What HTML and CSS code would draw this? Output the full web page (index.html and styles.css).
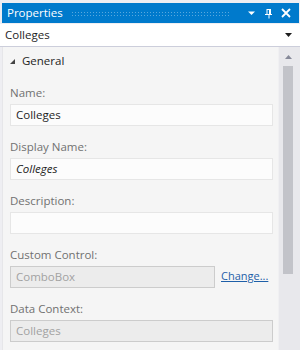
FILE: index.html
```html
<!DOCTYPE html>
<html>
<head>
<meta charset="utf-8">
<link rel="stylesheet" href="styles.css">
</head>
<body>
<div class="window">
  <div class="titlebar">
    <span class="title">Properties</span>
    <span class="dots"></span>
    <svg class="ticon" width="9" height="6" viewBox="0 0 9 6"><path d="M1 1.5 H8 L4.5 5 Z" fill="#fff"/></svg>
    <svg class="ticon pin" width="9" height="11" viewBox="0 0 9 11"><path d="M2.5 1 H7 V6 H8 V7 H5.5 V10.5 H4.5 V7 H1 V6 H2.5 Z M3.5 2 V6 H5 V2 Z" fill="#fff"/></svg>
    <svg class="ticon" width="10" height="10" viewBox="0 0 10 10"><path d="M1 1 L9 9 M9 1 L1 9" stroke="#fff" stroke-width="1.8"/></svg>
  </div>
  <div class="combo">
    <span class="combo-text">Colleges</span>
    <svg width="7" height="4" viewBox="0 0 7 4"><path d="M0 0 H7 L3.5 4 Z" fill="#1e1e1e"/></svg>
  </div>
  <div class="panel">
    <div class="content">
      <div class="section">
        <svg class="tri" width="5" height="5" viewBox="0 0 5 5"><path d="M5 0 V5 H0 Z" fill="#444"/></svg>
        <span>General</span>
      </div>
      <div class="field first">
        <div class="label">Name:</div>
        <div class="box">Colleges</div>
      </div>
      <div class="field">
        <div class="label">Display Name:</div>
        <div class="box italic">Colleges</div>
      </div>
      <div class="field">
        <div class="label">Description:</div>
        <div class="box"></div>
      </div>
      <div class="field">
        <div class="label">Custom Control:</div>
        <div class="row">
          <div class="box disabled short">ComboBox</div>
          <a class="link">Change...</a>
        </div>
      </div>
      <div class="field">
        <div class="label">Data Context:</div>
        <div class="box disabled">Colleges</div>
      </div>
    </div>
    <div class="scrollbar">
      <svg class="up" width="7" height="4" viewBox="0 0 7 4"><path d="M0 4 H7 L3.5 0 Z" fill="#868999"/></svg>
      <div class="thumb"></div>
    </div>
  </div>
</div>
</body>
</html>
```
FILE: styles.css
```css
* { box-sizing: border-box; }
html, body { margin: 0; padding: 0; }
body {
  width: 300px;
  height: 350px;
  overflow: hidden;
  background: #eeeef2;
  font-family: "Open Sans", "Noto Sans", sans-serif;
  font-size: 11px;
  color: #1e1e1e;
}
.window {
  padding: 3px 0 0 2px;
  height: 350px;
  display: flex;
  flex-direction: column;
}
.titlebar {
  height: 20px;
  background: #007acc;
  display: flex;
  align-items: center;
  padding: 0 8px 0 5px;
  margin-right: 1px;
  color: #fff;
}
.title { font-size: 11.5px; line-height: 20px; }
.dots {
  flex: 1;
  height: 5px;
  margin: 1px 10px 0 8px;
  background-image: radial-gradient(circle, rgba(255,255,255,0.35) 0.6px, transparent 0.9px);
  background-size: 3px 3px;
}
.ticon { display: block; margin-left: 6px; }
.pin { margin-left: 8px; margin-right: 2px; }
.combo {
  height: 23px;
  background: #fff;
  border-bottom: 1px solid #cccedb;
  display: flex;
  align-items: center;
  justify-content: space-between;
  padding: 0 8px 0 5px;
  margin: 1px 0 0 -2px;
  font-size: 11.5px;
}
.combo-text { line-height: 20px; }
.panel {
  flex: 1;
  display: flex;
  background: #f5f5f5;
  border-left: 1px solid #e6e6e9;
}
.content {
  flex: 1;
  padding: 6px 5px 0 7px;
}
.section {
  display: flex;
  align-items: center;
  height: 16px;
  line-height: 16px;
  font-size: 11.5px;
}
.tri { margin: 1px 7px 0 0; }
.field { margin-top: 13px; }
.field.first { margin-top: 16px; }
.label {
  color: #717171;
  line-height: 16px;
  margin-bottom: 3px;
  font-size: 11.5px;
}
.box {
  height: 22px;
  background: #fcfcfc;
  border: 1px solid #e6e6e6;
  padding: 0 5px;
  line-height: 20px;
  color: #1e1e1e;
  font-size: 11.5px;
}
.italic { font-style: italic; }
.box.disabled {
  background: #ececec;
  border-color: #cccccc;
  color: #a2a2a2;
}
.row { display: flex; align-items: center; }
.short { width: 205px; }
.link {
  color: #1e5fa8;
  text-decoration: underline;
  margin-left: 6px;
  margin-top: -4px;
  font-size: 11px;
}
.scrollbar {
  width: 22px;
  background: #e8e8ec;
  border-left: 1px solid #f0f0f2;
  display: flex;
  flex-direction: column;
  align-items: flex-start;
  padding: 8px 0 0 4px;
}
.up { display: block; margin-left: 2px; }
.thumb {
  margin-top: 7px;
  width: 10px;
  height: 208px;
  background: #c2c3c9;
}
```
